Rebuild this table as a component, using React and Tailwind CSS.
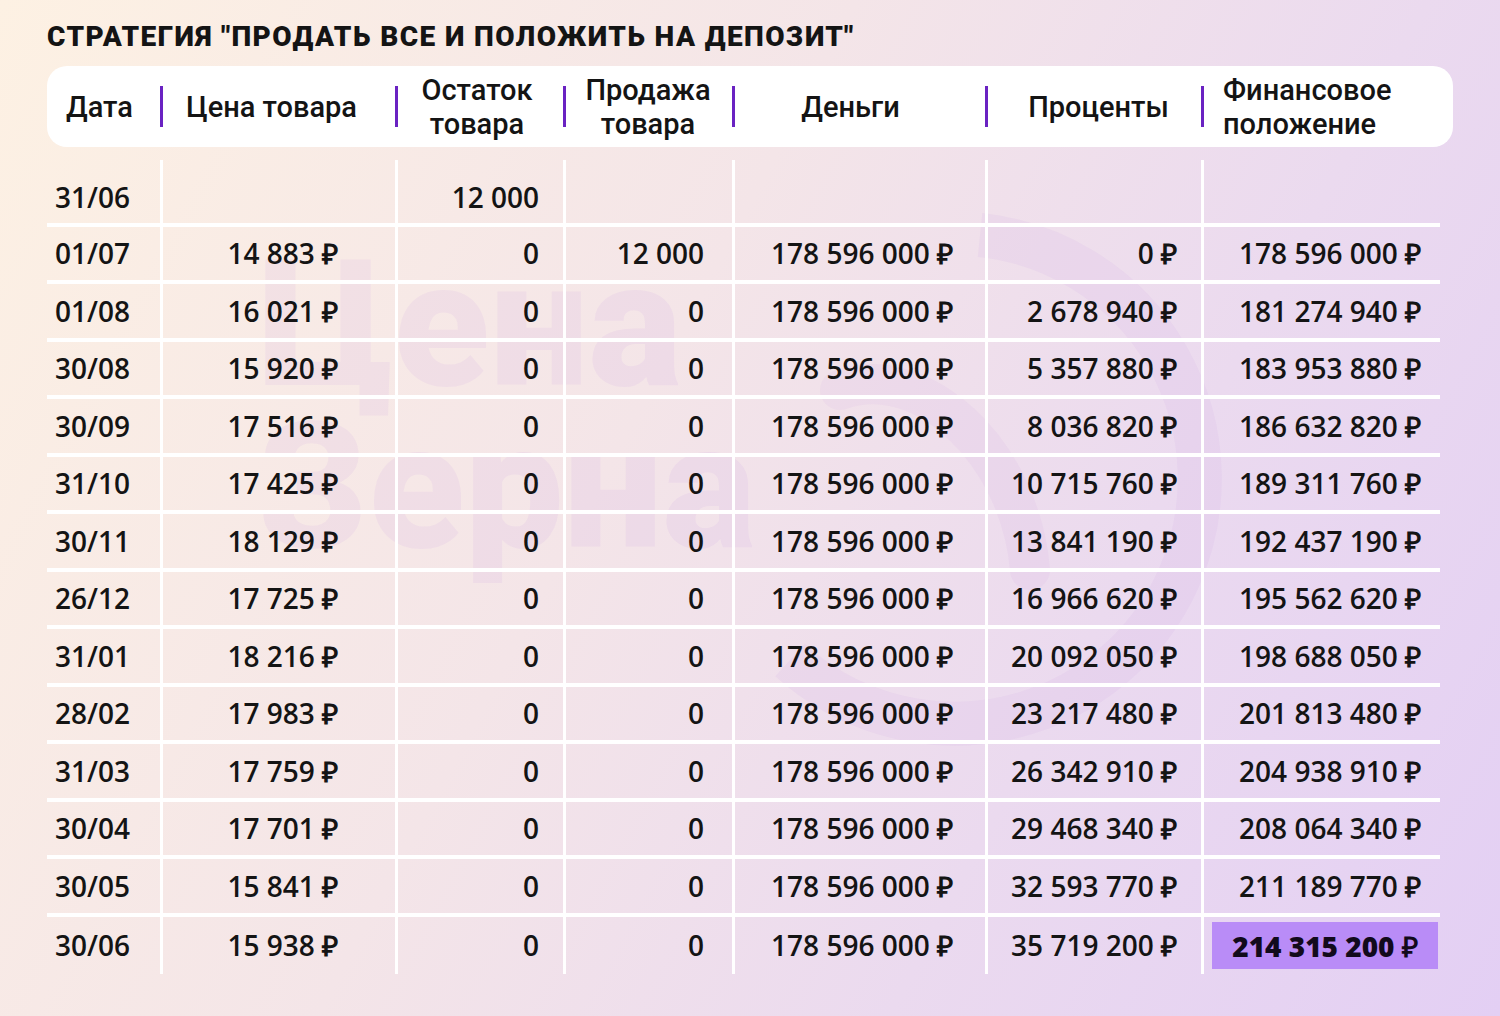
import React from 'react';

const rows = [
  ['31/06', '', '12 000', '', '', '', ''],
  ['01/07', '14 883 ₽', '0', '12 000', '178 596 000 ₽', '0 ₽', '178 596 000 ₽'],
  ['01/08', '16 021 ₽', '0', '0', '178 596 000 ₽', '2 678 940 ₽', '181 274 940 ₽'],
  ['30/08', '15 920 ₽', '0', '0', '178 596 000 ₽', '5 357 880 ₽', '183 953 880 ₽'],
  ['30/09', '17 516 ₽', '0', '0', '178 596 000 ₽', '8 036 820 ₽', '186 632 820 ₽'],
  ['31/10', '17 425 ₽', '0', '0', '178 596 000 ₽', '10 715 760 ₽', '189 311 760 ₽'],
  ['30/11', '18 129 ₽', '0', '0', '178 596 000 ₽', '13 841 190 ₽', '192 437 190 ₽'],
  ['26/12', '17 725 ₽', '0', '0', '178 596 000 ₽', '16 966 620 ₽', '195 562 620 ₽'],
  ['31/01', '18 216 ₽', '0', '0', '178 596 000 ₽', '20 092 050 ₽', '198 688 050 ₽'],
  ['28/02', '17 983 ₽', '0', '0', '178 596 000 ₽', '23 217 480 ₽', '201 813 480 ₽'],
  ['31/03', '17 759 ₽', '0', '0', '178 596 000 ₽', '26 342 910 ₽', '204 938 910 ₽'],
  ['30/04', '17 701 ₽', '0', '0', '178 596 000 ₽', '29 468 340 ₽', '208 064 340 ₽'],
  ['30/05', '15 841 ₽', '0', '0', '178 596 000 ₽', '32 593 770 ₽', '211 189 770 ₽'],
  ['30/06', '15 938 ₽', '0', '0', '178 596 000 ₽', '35 719 200 ₽', '214 315 200 ₽'],
];

// per-column alignment (matches the white grid lines)
const colCls = [
  'justify-start pl-[8px]',
  'justify-end pr-[57px] border-l-[3px]',
  'justify-end pr-[24px] border-l-[3px]',
  'justify-end pr-[28px] border-l-[3px]',
  'justify-end pr-[32px] border-l-[3px]',
  'justify-end pr-[24px] border-l-[3px]',
  'justify-end pr-[19px] border-l-[3px]',
];

function Sep() {
  return <div className="h-[41px] w-[3px] shrink-0 bg-[#6a22c2]" />;
}

function HeaderRow() {
  return (
    <div className="grid h-[81px] w-[1406px] grid-cols-[113px_235px_168px_169px_253px_216px_1fr] items-center rounded-[20px] bg-white font-['Roboto',sans-serif] text-[29px] font-medium leading-[34px] text-[#141414]">
      <div className="pl-[19px]">Дата</div>
      <div className="flex items-center">
        <Sep />
        <div className="flex-1 pr-[15px] text-center">Цена товара</div>
      </div>
      <div className="flex items-center">
        <Sep />
        <div className="flex-1 pr-[7px] text-center">Остаток<br />товара</div>
      </div>
      <div className="flex items-center">
        <Sep />
        <div className="flex-1 pr-[2px] text-center">Продажа<br />товара</div>
      </div>
      <div className="flex items-center">
        <Sep />
        <div className="flex-1 pr-[19px] text-center">Деньги</div>
      </div>
      <div className="flex items-center">
        <Sep />
        <div className="flex-1 pl-[8px] text-center">Проценты</div>
      </div>
      <div className="flex items-center">
        <Sep />
        <div className="flex-1 pl-[19px]">Финансовое<br />положение</div>
      </div>
    </div>
  );
}

export default function App() {
  return (
    <div className="relative h-[1016px] w-[1500px] overflow-hidden bg-[linear-gradient(118deg,#fdf1e3_0%,#f4e5e8_42%,#ebdaef_70%,#e3cff4_100%)]">
      {/* watermark */}
      <div className="pointer-events-none absolute left-[258px] top-[244px] select-none font-['Roboto',sans-serif] text-[176px] font-black leading-[162px] text-[#a964dc]/[0.07]">
        Цена<br />Зерна
      </div>
      <svg className="pointer-events-none absolute left-[730px] top-[210px]" width="540" height="560" viewBox="0 0 540 560">
        <path d="M250 25 A 245 245 0 1 1 60 450" fill="none" stroke="#a964dc" strokeOpacity="0.06" strokeWidth="44" />
        <path d="M110 180 C 190 150 290 240 300 360" fill="none" stroke="#a964dc" strokeOpacity="0.05" strokeWidth="40" strokeLinecap="round" />
      </svg>

      <div className="relative pl-[47px] pt-[23px]">
        <h1 className="whitespace-nowrap font-['Roboto',sans-serif] text-[28px] font-black uppercase leading-none tracking-[1.4px] text-[#141414]">
          Стратегия "Продать все и положить на депозит"
        </h1>

        <div className="mt-[15px]">
          <HeaderRow />
        </div>

        <div className="mt-[13px] grid w-[1393px] grid-cols-[113px_235px_168px_169px_253px_216px_239px] font-['Open_Sans',sans-serif] text-[28px] font-semibold leading-none text-[#141414]">
          {rows.map((row, r) => {
            const last = r === rows.length - 1;
            const rowCls = r === 0 ? 'h-[66.5px] pt-[12px] border-b-4' : last ? 'h-[57.5px]' : 'h-[57.5px] border-b-4';
            return row.map((val, c) => {
              if (last && c === 6) {
                return (
                  <div key={c} className="flex h-[57.5px] items-start border-l-[3px] border-white pl-[8px] pr-[2px] pt-[5.5px]">
                    <div className="flex h-[47px] flex-1 items-center justify-center whitespace-nowrap bg-[#b98cf7] font-extrabold text-[#120a1c]">
                      {val}
                    </div>
                  </div>
                );
              }
              return (
                <div key={c} className={`flex items-center whitespace-nowrap border-white ${rowCls} ${colCls[c]}`}>
                  {val}
                </div>
              );
            });
          })}
        </div>
      </div>
    </div>
  );
}
